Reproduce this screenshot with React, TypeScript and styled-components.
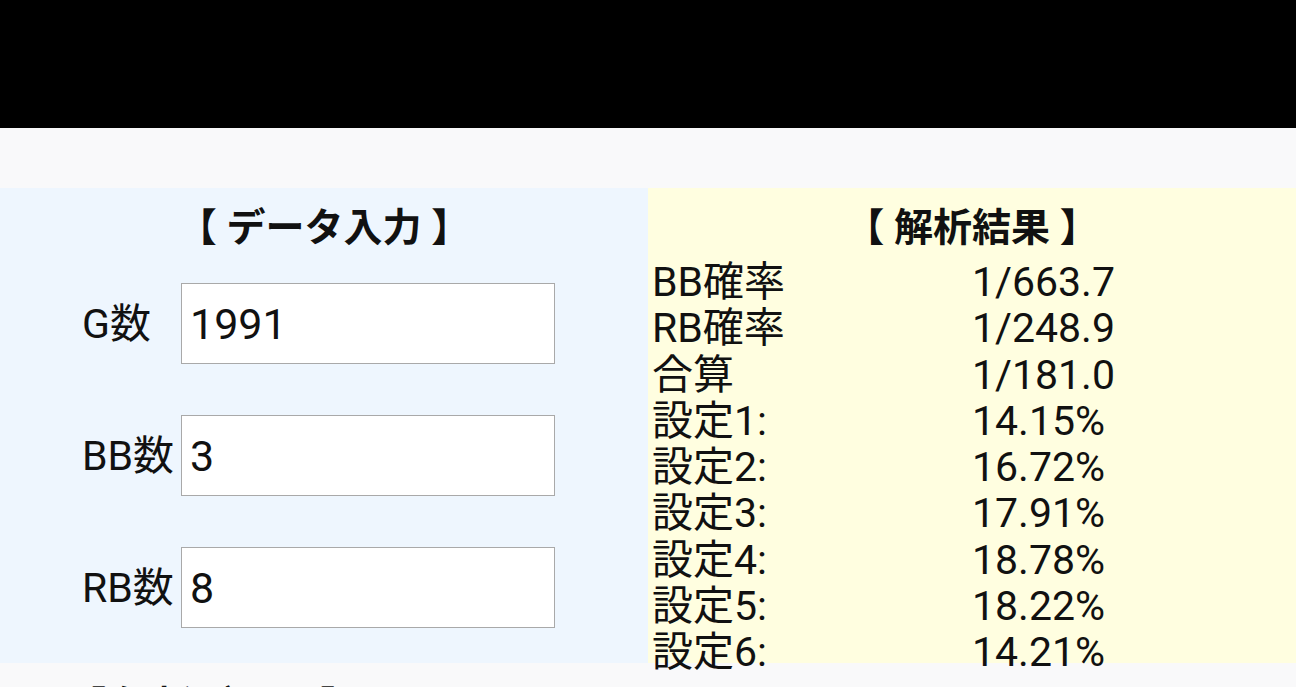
import React, { ReactElement } from 'react';
import styled, { createGlobalStyle } from 'styled-components';

const GlobalStyle = createGlobalStyle`
  html, body {
    margin: 0;
    padding: 0;
    background: #f9f9fa;
  }
  body {
    font-family: Roboto, "Noto Sans CJK JP", sans-serif;
    color: #111111;
    overflow: hidden;
  }
`;

const Page = styled.div`
  width: 1296px;
  height: 687px;
  overflow: hidden;
`;

const Header = styled.header`
  height: 128px;
  background: #000000;
`;

const Spacer = styled.div`
  height: 60px;
`;

const Panels = styled.div`
  display: flex;
  height: 475px;
`;

interface PanelProps {
  bg: string;
}
const Panel = styled.section<PanelProps>`
  flex: 1;
  background: ${(props) => props.bg};
  display: flex;
  flex-direction: column;
`;

const Title = styled.h2`
  margin: 18px 0 0;
  font-size: 39px;
  line-height: 44px;
  font-weight: 700;
  text-align: center;
`;

const Form = styled.div`
  display: grid;
  grid-template-columns: 99px 374px;
  row-gap: 51px;
  margin: 33px 0 0 82px;
  align-items: center;
`;

const Label = styled.label`
  font-size: 41px;
  line-height: 48px;
`;

const Field = styled.input`
  box-sizing: border-box;
  width: 374px;
  height: 81px;
  border: 1px solid #a9a9a9;
  background: #ffffff;
  padding: 0 8px;
  font-family: Roboto, "Noto Sans CJK JP", sans-serif;
  font-size: 43px;
  color: #111111;
  outline: none;
`;

const Results = styled.div`
  display: grid;
  grid-template-columns: 1fr 1fr;
  margin-top: 9px;
  font-size: 41px;
  line-height: 46.3px;
`;

interface CellProps {
  pad: number;
}
const Cell = styled.div<CellProps>`
  padding-left: ${(props) => props.pad}px;
  white-space: nowrap;
`;

const SubTitle = styled.h2`
  margin: 21px 0 0 67px;
  font-size: 39px;
  line-height: 44px;
  font-weight: 700;
`;

const inputs = [
  { label: 'G数', value: '1991' },
  { label: 'BB数', value: '3' },
  { label: 'RB数', value: '8' },
];

const results: [string, string][] = [
  ['BB確率', '1/663.7'],
  ['RB確率', '1/248.9'],
  ['合算', '1/181.0'],
  ['設定1:', '14.15%'],
  ['設定2:', '16.72%'],
  ['設定3:', '17.91%'],
  ['設定4:', '18.78%'],
  ['設定5:', '18.22%'],
  ['設定6:', '14.21%'],
];

export default function App(): ReactElement {
  return (
    <Page>
      <GlobalStyle />
      <Header />
      <Spacer />
      <Panels>
        <Panel bg="#eef6fe">
          <Title>【 データ入力 】</Title>
          <Form>
            {inputs.map((item) => (
              <React.Fragment key={item.label}>
                <Label>{item.label}</Label>
                <Field defaultValue={item.value} />
              </React.Fragment>
            ))}
          </Form>
        </Panel>
        <Panel bg="#fffee0">
          <Title>【 解析結果 】</Title>
          <Results>
            {results.map(([name, value]) => (
              <React.Fragment key={name}>
                <Cell pad={4}>{name}</Cell>
                <Cell pad={0}>{value}</Cell>
              </React.Fragment>
            ))}
          </Results>
        </Panel>
      </Panels>
      <SubTitle>【 解析グラフ 】</SubTitle>
    </Page>
  );
}
